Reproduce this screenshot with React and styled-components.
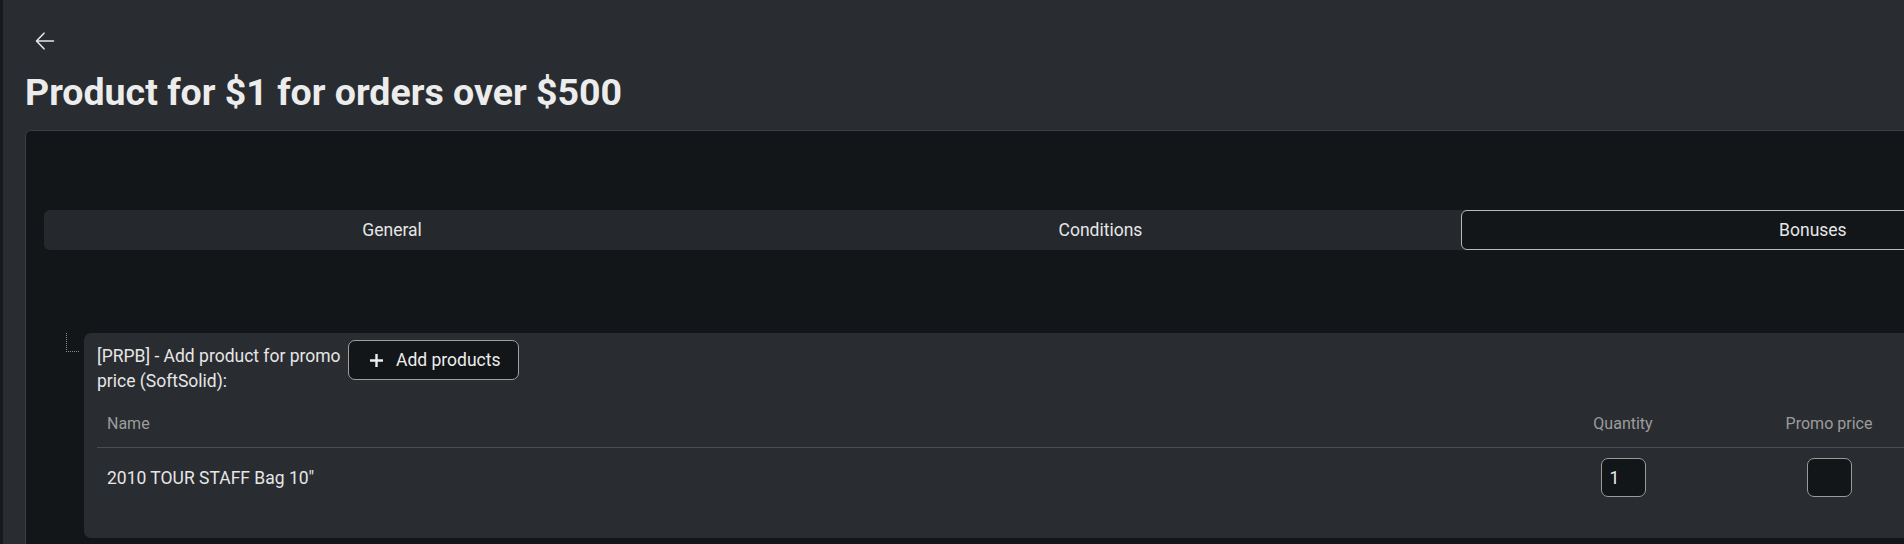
import React from "react";
import styled, { createGlobalStyle } from "styled-components";

const GlobalStyle = createGlobalStyle`
  html, body {
    margin: 0;
    padding: 0;
    background: #292c30;
    overflow: hidden;
  }
  body {
    font-family: Roboto, "Liberation Sans", Arial, sans-serif;
    font-size: 17.5px;
    color: #e6e6e6;
  }
  * {
    box-sizing: border-box;
  }
`;

const Page = styled.div`
  width: 2200px;
  min-height: 544px;
  border-left: 3px solid #17191c;
  padding: 21px 0 0 22px;
`;

const BackButton = styled.button`
  width: 40px;
  height: 40px;
  display: flex;
  align-items: center;
  justify-content: center;
  padding: 0;
  margin-left: -0.5px;
  border: none;
  background: transparent;
  color: #e6e6e6;
  cursor: pointer;
`;

const Title = styled.h1`
  margin: 10px 0 0;
  font-size: 37.5px;
  font-weight: 700;
  line-height: 42px;
  color: #ececec;
`;

const Card = styled.div`
  width: 2160px;
  margin-top: 17px;
  min-height: 500px;
  padding: 79px 19px 0 18px;
  background: #131619;
  border: 1px solid #3a3d41;
  border-radius: 6px;
`;

const TabBar = styled.div`
  display: flex;
  height: 40px;
  background: #25282c;
  border-radius: 6px;
`;

const Tab = styled.div`
  flex: 1 1 auto;
  display: flex;
  align-items: center;
  justify-content: center;
  padding-bottom: 1px;
  border: 1px solid ${(props) => (props.active ? "#b8b8b8" : "transparent")};
  border-radius: 6px;
  background: ${(props) => (props.active ? "#131619" : "transparent")};
  color: #e6e6e6;
  cursor: pointer;
`;

const TreeNode = styled.div`
  position: relative;
  margin-top: 83px;
  padding-left: 40px;
`;

const Connector = styled.span`
  position: absolute;
  left: 22px;
  top: 0;
  width: 13px;
  height: 19px;
  border-left: 1px dotted #8a8a8a;
  border-bottom: 1px dotted #8a8a8a;
`;

const Panel = styled.div`
  background: #292c30;
  border-radius: 7px;
  padding: 7px 13px 31px;
`;

const PanelHeader = styled.div`
  display: flex;
  align-items: flex-start;
  gap: 7px;
`;

const Label = styled.div`
  width: 244px;
  padding-top: 4px;
  line-height: 24.5px;
  color: #e6e6e6;
`;

const AddButton = styled.button`
  height: 40px;
  display: inline-flex;
  align-items: center;
  gap: 12px;
  padding: 0 17px 0 20px;
  background: #131619;
  border: 1px solid #a0a0a0;
  border-radius: 7px;
  color: #ededed;
  font-family: inherit;
  font-size: 17.5px;
  cursor: pointer;
`;

const columns = "1fr 206px 206px 220px";

const HeadRow = styled.div`
  display: grid;
  grid-template-columns: ${columns};
  margin-top: 7px;
  border-bottom: 1px solid #4b4e52;
`;

const HeadCell = styled.div`
  padding: 12px 10px 11px;
  font-size: 16px;
  line-height: 24px;
  color: #9c9c9c;
  text-align: ${(props) => props.align || "left"};
`;

const Row = styled.div`
  display: grid;
  grid-template-columns: ${columns};
  align-items: center;
`;

const Cell = styled.div`
  padding: 10px;
  display: flex;
  justify-content: ${(props) => (props.center ? "center" : "flex-start")};
  color: #e6e6e6;
`;

const NumberInput = styled.input`
  width: 45px;
  height: 39px;
  padding: 0 8px;
  background: #131619;
  border: 1px solid #9a9a9a;
  border-radius: 7px;
  color: #ededed;
  font-family: inherit;
  font-size: 17.5px;
  outline: none;
`;

function ArrowBack() {
  return (
    <svg width="20" height="20" viewBox="0 0 20 20" fill="none">
      <path
        d="M18.5 10H1.8M9 2.2L1.5 10L9 17.8"
        stroke="currentColor"
        strokeWidth="1.6"
        strokeLinecap="round"
        strokeLinejoin="round"
      />
    </svg>
  );
}

function PlusIcon() {
  return (
    <svg width="15" height="15" viewBox="0 0 15 15" fill="none">
      <path d="M7.5 1V14M1 7.5H14" stroke="currentColor" strokeWidth="2.4" />
    </svg>
  );
}

const tabs = ["General", "Conditions", "Bonuses"];

export default function App() {
  return (
    <>
      <GlobalStyle />
      <Page>
        <BackButton aria-label="Back">
          <ArrowBack />
        </BackButton>
        <Title>Product for $1 for orders over $500</Title>
        <Card>
          <TabBar>
            {tabs.map((t) => (
              <Tab key={t} active={t === "Bonuses"}>
                {t}
              </Tab>
            ))}
          </TabBar>
          <TreeNode>
            <Connector />
            <Panel>
              <PanelHeader>
                <Label>[PRPB] - Add product for promo price (SoftSolid):</Label>
                <AddButton>
                  <PlusIcon />
                  Add products
                </AddButton>
              </PanelHeader>
              <HeadRow>
                <HeadCell>Name</HeadCell>
                <HeadCell align="center">Quantity</HeadCell>
                <HeadCell align="center">Promo price</HeadCell>
                <HeadCell />
              </HeadRow>
              <Row>
                <Cell>2010 TOUR STAFF Bag 10"</Cell>
                <Cell center>
                  <NumberInput defaultValue="1" />
                </Cell>
                <Cell center>
                  <NumberInput defaultValue="" />
                </Cell>
                <Cell />
              </Row>
            </Panel>
          </TreeNode>
        </Card>
      </Page>
    </>
  );
}
